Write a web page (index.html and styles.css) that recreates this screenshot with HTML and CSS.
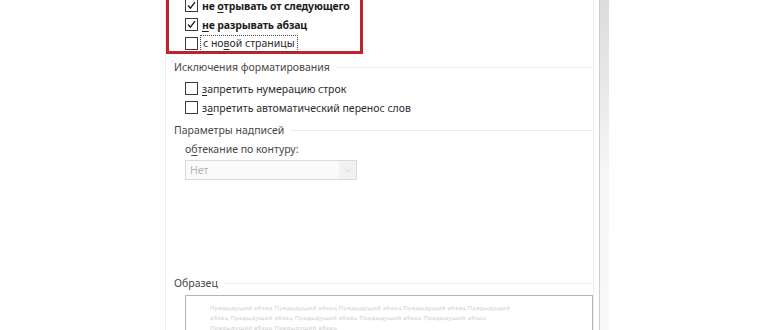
FILE: index.html
```html
<!DOCTYPE html>
<html lang="ru">
<head>
  <meta charset="UTF-8" />
  <title>Абзац — положение на странице</title>
  <link rel="stylesheet" href="styles.css">
</head>
<body>
  <div class="page">
    <div class="gutter"></div>

    <div class="panel">
      <div class="highlight">
        <label class="check strong">
          <span class="box"><svg viewBox="0 0 13 13"><path d="M2.5 6.5 L5.2 9.6 L10.6 2.6" /></svg></span>
          <span>не <u>о</u>трывать от следующего</span>
        </label>
        <label class="check strong">
          <span class="box"><svg viewBox="0 0 13 13"><path d="M2.5 6.5 L5.2 9.6 L10.6 2.6" /></svg></span>
          <span><u>н</u>е разрывать абзац</span>
        </label>
        <label class="check last">
          <span class="box"></span>
          <span class="focus">с но<u>в</u>ой страницы</span>
        </label>
      </div>

      <div class="legend">Исключения форматирования</div>
      <label class="check sub">
        <span class="box"></span>
        <span><u>з</u>апретить нумерацию строк</span>
      </label>
      <label class="check sub">
        <span class="box"></span>
        <span>з<u>а</u>претить автоматический перенос слов</span>
      </label>

      <div class="legend second">Параметры надписей</div>
      <div class="field-label">о<u>б</u>текание по контуру:</div>
      <div class="select">
        <span class="select-value">Нет</span>
        <span class="select-arrow">
          <svg viewBox="0 0 10 6"><path d="M1 1 L5 5 L9 1" /></svg>
        </span>
      </div>

      <div class="legend sample-legend">Образец</div>
      <div class="sample">
        <p>Предыдущий абзац Предыдущий абзац Предыдущий абзац Предыдущий абзац Предыдущий абзац Предыдущий абзац Предыдущий абзац Предыдущий абзац Предыдущий абзац Предыдущий абзац Предыдущий абзац</p>
      </div>
    </div>

    <div class="edge"></div>
  </div>
</body>
</html>
```

FILE: styles.css
```css
:root {
  --text: #2b2b2b;
  --label: #474747;
  --line: #ebebeb;
  --red: #c1232c;
}

* {
  box-sizing: border-box;
  margin: 0;
  padding: 0;
}

body {
  background: #fff;
  font-family: "Noto Sans", "DejaVu Sans", sans-serif;
  font-size: 10.5px;
  color: var(--text);
}

.page {
  display: flex;
  height: 330px;
  overflow: hidden;
}

.gutter {
  width: 165px;
  flex: none;
}

.panel {
  width: 429px;
  flex: none;
  border-left: 1px solid #efefef;
  border-right: 1px solid #efefef;
  display: flex;
  flex-direction: column;
  align-items: flex-start;
}

.edge {
  width: 10px;
  margin-left: 5px;
  flex: none;
  border-left: 1px solid #cfcfcf;
  background: linear-gradient(to bottom, #dcdcdc 0, #e9e9e9 90px, #f6f6f6 170px, #f8f8f8 100%);
}

.highlight {
  width: 197px;
  margin-top: -7px;
  border: 3px solid var(--red);
  padding-left: 16px;
}

.check {
  display: flex;
  align-items: center;
  gap: 4px;
  height: 19px;
  flex: none;
  white-space: nowrap;
}

.check.last {
  height: 17px;
  align-items: flex-start;
  padding-top: 3px;
}

.check.strong {
  font-weight: bold;
  letter-spacing: -0.15px;
  color: #1e1e1e;
}

.check.sub {
  padding-left: 19px;
}

.box {
  width: 13px;
  height: 13px;
  flex: none;
  border: 1px solid #3a3a3a;
  background: #fff;
  display: flex;
}

.box svg {
  width: 11px;
  height: 11px;
  fill: none;
  stroke: #1a1a1a;
  stroke-width: 1.6;
}

.focus {
  outline: 1px dotted #444;
  outline-offset: 1px;
  padding: 0 1px;
  line-height: 13px;
}

u {
  text-decoration-thickness: 1px;
  text-underline-offset: 2px;
}

.legend {
  display: flex;
  align-items: center;
  gap: 6px;
  width: 100%;
  height: 16px;
  flex: none;
  margin-top: 5px;
  margin-bottom: 4px;
  padding-left: 8px;
  color: var(--label);
}

.legend::after {
  content: "";
  flex: 1;
  border-top: 1px solid var(--line);
}

.legend.second {
  margin-top: 5px;
  margin-bottom: 4px;
}

.field-label {
  padding-left: 19px;
  height: 15px;
  line-height: 15px;
  color: var(--label);
}

.select {
  margin: 3px 0 0 19px;
  width: 172px;
  height: 20px;
  flex: none;
  border: 1px solid #dadada;
  background: #fafafa;
  display: flex;
  align-items: center;
}

.select-value {
  flex: 1;
  padding-left: 4px;
  color: #b3b3b3;
}

.select-arrow {
  width: 17px;
  height: 100%;
  background: #f1f1f1;
  display: flex;
  align-items: center;
  justify-content: center;
}

.select-arrow svg {
  width: 8px;
  height: 5px;
  fill: none;
  stroke: #cfcfcf;
  stroke-width: 1;
}

.legend.sample-legend {
  margin-top: 95px;
  margin-bottom: 4px;
}

.sample {
  margin-left: 19px;
  width: 408px;
  flex: 1;
  border: 1px solid #b4b4b4;
  border-bottom: none;
  padding: 7px 0 0 24px;
}

.sample p {
  max-width: 312px;
  font-size: 6px;
  letter-spacing: 0.32px;
  line-height: 10px;
  color: #d0d0d0;
}
```
